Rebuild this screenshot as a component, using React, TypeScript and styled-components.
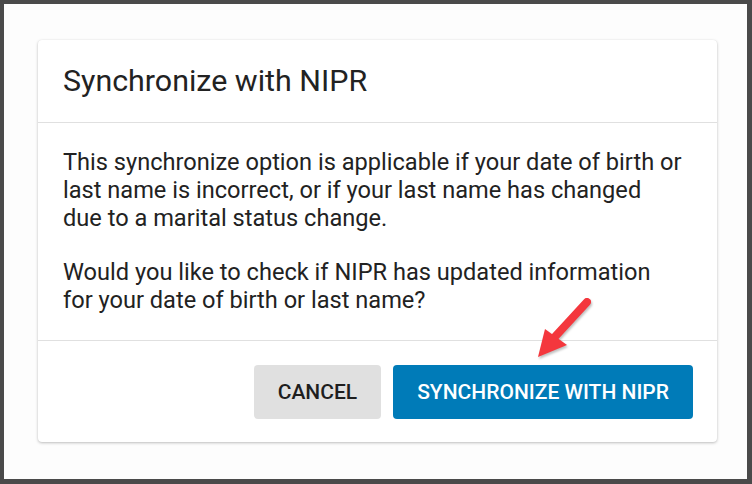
import React from 'react';
import styled, { createGlobalStyle } from 'styled-components';

const GlobalStyle = createGlobalStyle`
  html, body {
    margin: 0;
    padding: 0;
  }
  body {
    background: #4a4a4a;
    font-family: Roboto, "Liberation Sans", Arial, sans-serif;
  }
`;

const Frame = styled.div`
  box-sizing: border-box;
  width: 752px;
  height: 484px;
  border-style: solid;
  border-color: #4a4a4a;
  border-width: 4px 5px 5px 4px;
  background: #fdfdfd;
  padding: 36px 30px 0 34px;
`;

const Card = styled.div`
  position: relative;
  background: #fff;
  border-radius: 4px;
  box-shadow: 0 1px 3px rgba(0, 0, 0, 0.25), 0 0 1px rgba(0, 0, 0, 0.08);
  color: #222;
`;

const Header = styled.div`
  padding: 24px 25px;
  border-bottom: 1px solid #e0e0e0;
`;

const Title = styled.h2`
  margin: 0;
  font-size: 30.4px;
  line-height: 34px;
  font-weight: 400;
`;

const Body = styled.div`
  padding: 25px 25px 26px;
  border-bottom: 1px solid #e0e0e0;
`;

const Paragraph = styled.p`
  margin: 0;
  font-size: 23.6px;
  line-height: 28px;
  white-space: nowrap;
  & + & {
    margin-top: 26px;
  }
`;

const Footer = styled.div`
  display: flex;
  justify-content: flex-end;
  gap: 12px;
  padding: 24px 24px 23px;
`;

const Button = styled.button<{ $primary?: boolean }>`
  height: 54px;
  padding: 0 24px;
  border: none;
  border-radius: 4px;
  font-family: Roboto, "Liberation Sans", Arial, sans-serif;
  font-size: 21px;
  font-weight: 500;
  text-transform: uppercase;
  background: ${({ $primary }) => ($primary ? '#007bb8' : '#e0e0e0')};
  color: ${({ $primary }) => ($primary ? '#fff' : '#1e1e1e')};
  cursor: pointer;
`;

const Arrow = styled.svg`
  position: absolute;
  left: 494px;
  top: 256px;
  filter: drop-shadow(1px 2px 1px rgba(0, 0, 0, 0.25));
`;

const App = () => {
  return (
    <>
      <GlobalStyle />
      <Frame>
        <Card>
          <Header>
            <Title>Synchronize with NIPR</Title>
          </Header>
          <Body>
            <Paragraph>
              This synchronize option is applicable if your date of birth or
              <br />
              last name is incorrect, or if your last name has changed
              <br />
              due to a marital status change.
            </Paragraph>
            <Paragraph>
              Would you like to check if NIPR has updated information
              <br />
              for your date of birth or last name?
            </Paragraph>
          </Body>
          <Footer>
            <Button>Cancel</Button>
            <Button $primary>Synchronize with NIPR</Button>
          </Footer>
          <Arrow width="60" height="64" viewBox="0 0 60 64">
            <line
              x1="55"
              y1="6"
              x2="20"
              y2="44"
              stroke="#f4373d"
              strokeWidth="8"
              strokeLinecap="round"
            />
            <polygon points="6,61 13,33 35,49" fill="#f4373d" />
          </Arrow>
        </Card>
      </Frame>
    </>
  );
};

export default App;
